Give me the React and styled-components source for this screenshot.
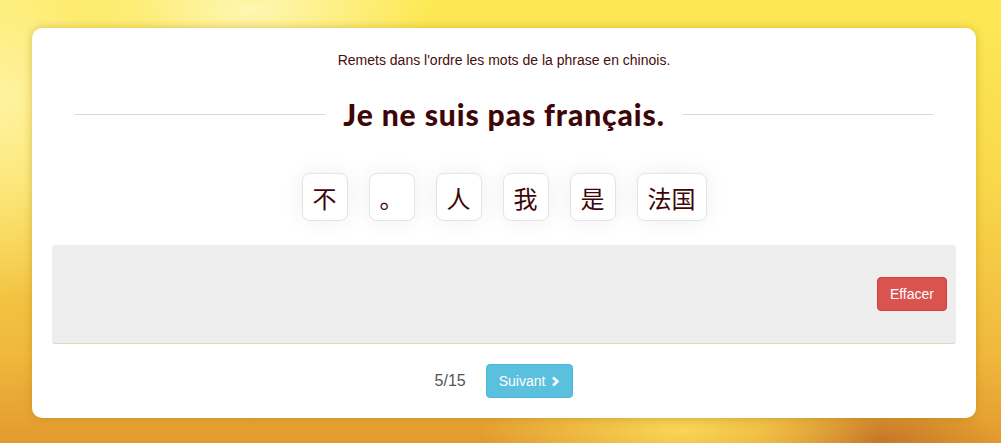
import styled, { createGlobalStyle } from "styled-components";

const GlobalStyle = createGlobalStyle`
  html, body {
    margin: 0;
    padding: 0;
  }
  body {
    font-family: "Liberation Sans", Arial, sans-serif;
    width: 1001px;
    height: 443px;
    overflow: hidden;
    background:
      radial-gradient(ellipse 180px 60px at 250px 10px, rgba(255, 248, 190, 0.9), transparent),
      radial-gradient(ellipse 200px 60px at 680px 430px, rgba(250, 220, 90, 0.9), transparent),
      radial-gradient(ellipse 120px 40px at 880px 440px, rgba(190, 110, 40, 0.8), transparent),
      radial-gradient(ellipse 150px 200px at 0px 100px, rgba(255, 245, 170, 0.9), transparent),
      linear-gradient(180deg, #fde955 0%, #f9d94a 40%, #f0b83c 80%, #e29a2e 100%);
  }
`;

const Page = styled.div`
  padding: 28px 25px 25px 32px;
`;

const Card = styled.div`
  width: 944px;
  box-sizing: border-box;
  background: #fff;
  border-radius: 10px;
  box-shadow: 0 0 8px rgba(150, 110, 0, 0.35);
  padding: 24px 20px 20px;
  display: flex;
  flex-direction: column;
  align-items: stretch;
`;

const Instruction = styled.div`
  text-align: center;
  font-size: 14px;
  line-height: 16px;
  color: #4a0c0c;
`;

const TitleRow = styled.div`
  display: flex;
  align-items: center;
  gap: 18px;
  margin: 28px 23px 0;
`;

const Rule = styled.div`
  flex: 1;
  height: 1px;
  background: #d9d9d9;
`;

const Title = styled.h1`
  margin: 0;
  font-family: "Lato", "Open Sans", sans-serif;
  font-weight: 900;
  font-size: 30px;
  line-height: 36px;
  color: #3e0606;
  letter-spacing: 0.9px;
`;

const Tiles = styled.div`
  display: flex;
  justify-content: center;
  gap: 21px;
  margin-top: 41px;
`;

const Tile = styled.div`
  min-width: 46px;
  height: 48px;
  box-sizing: border-box;
  padding: 0 10px;
  display: flex;
  align-items: center;
  justify-content: center;
  background: #fff;
  border: 1px solid #e4e4e4;
  border-radius: 8px;
  box-shadow: 0 0 22px rgba(0, 0, 0, 0.07);
  font-family: "Noto Sans CJK SC", "Noto Sans", sans-serif;
  font-size: 24px;
  color: #3e0606;
`;

const DropZone = styled.div`
  margin-top: 24px;
  height: 99px;
  box-sizing: border-box;
  background: #eeeeee;
  border-radius: 3px;
  border-bottom: 1px solid #e6d6c0;
  display: flex;
  align-items: center;
  justify-content: flex-end;
  padding-right: 9px;
`;

const Button = styled.button`
  font-family: "Liberation Sans", Arial, sans-serif;
  font-size: 14px;
  line-height: 20px;
  color: #fff;
  border-radius: 4px;
  border: 1px solid ${({ $border }) => $border};
  background: ${({ $bg }) => $bg};
  padding: 6px 12px;
  height: 34px;
  display: inline-flex;
  align-items: center;
  gap: 6px;
  cursor: pointer;
`;

const Footer = styled.div`
  display: flex;
  justify-content: center;
  align-items: center;
  gap: 20px;
  margin-top: 20px;
`;

const Counter = styled.span`
  font-size: 16px;
  color: #555;
`;

const words = ["不", "。", "人", "我", "是", "法国"];

export default function App() {
  return (
    <>
      <GlobalStyle />
      <Page>
        <Card>
          <Instruction>Remets dans l'ordre les mots de la phrase en chinois.</Instruction>
          <TitleRow>
            <Rule />
            <Title>Je ne suis pas français.</Title>
            <Rule />
          </TitleRow>
          <Tiles>
            {words.map((w, i) => (
              <Tile key={i}>{w}</Tile>
            ))}
          </Tiles>
          <DropZone>
            <Button $bg="#d9534f" $border="#d43f3a">Effacer</Button>
          </DropZone>
          <Footer>
            <Counter>5/15</Counter>
            <Button $bg="#5bc0de" $border="#46b8da">
              Suivant
              <svg width="9" height="11" viewBox="0 0 9 11">
                <path d="M2 1.5 L6.5 5.5 L2 9.5" stroke="#fff" strokeWidth="2.4" fill="none" />
              </svg>
            </Button>
          </Footer>
        </Card>
      </Page>
    </>
  );
}
